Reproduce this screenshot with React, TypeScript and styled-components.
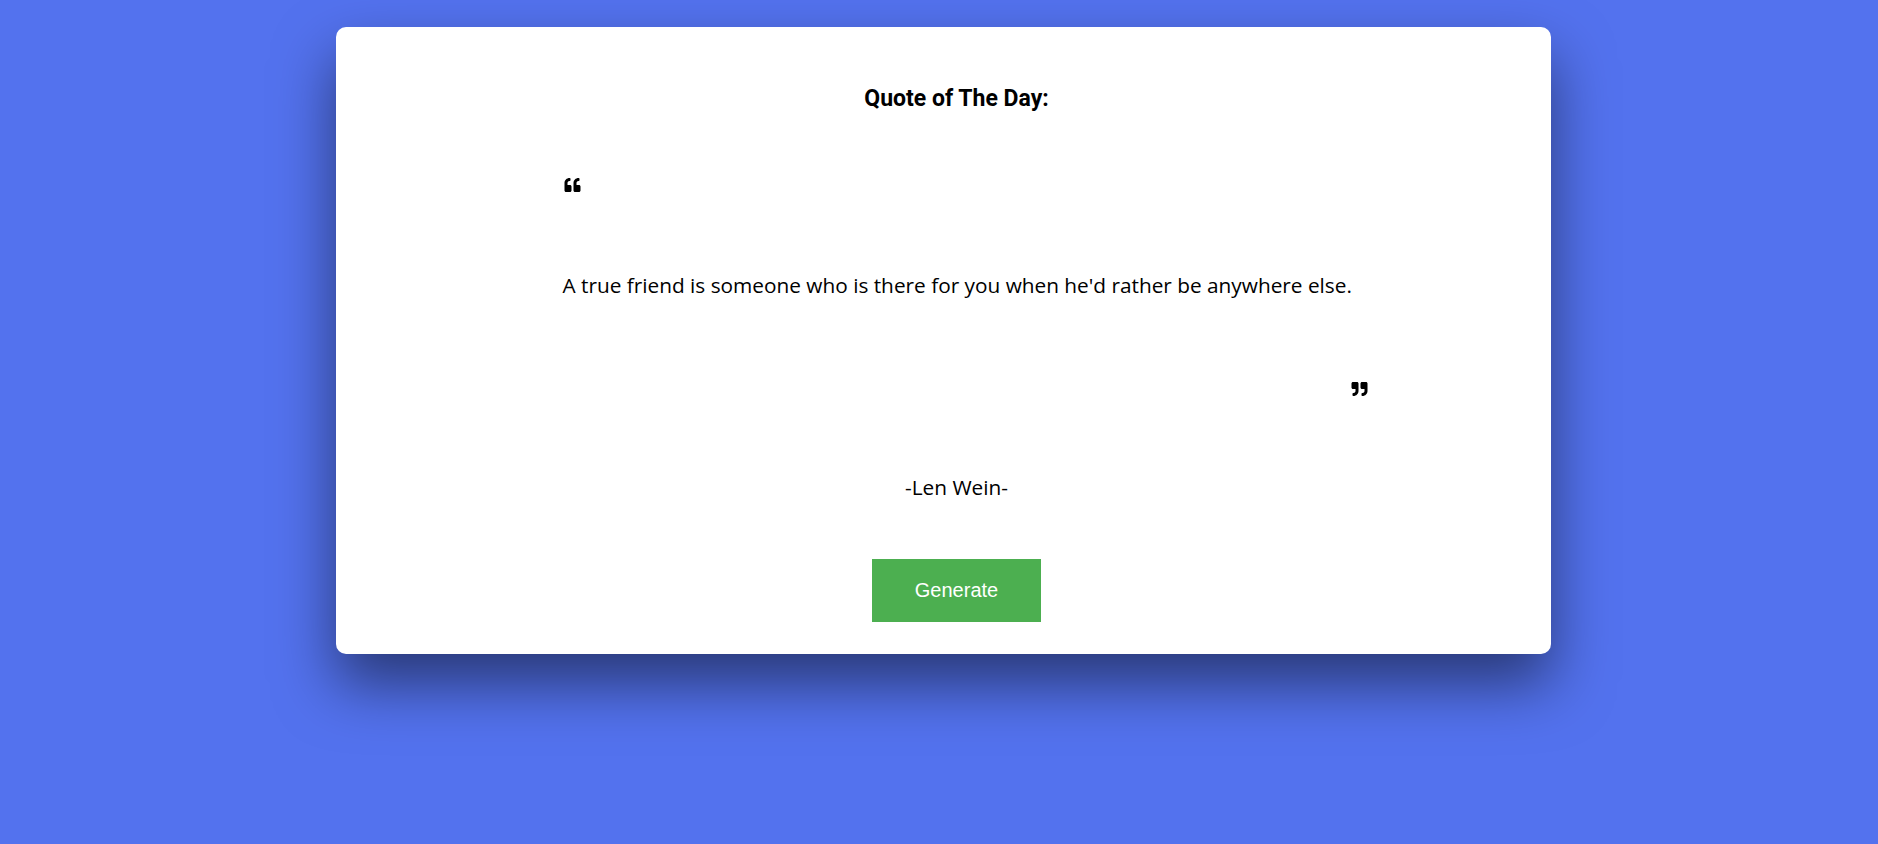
import React from 'react';
import styled, { createGlobalStyle } from 'styled-components';
import { FaQuoteLeft, FaQuoteRight } from 'react-icons/fa';

const GlobalStyle = createGlobalStyle`
  html, body {
    margin: 0;
    padding: 0;
    background: #5372ee;
    font-family: "Open Sans", "Liberation Sans", sans-serif;
  }
`

const Page = styled.div`
  min-height: 844px;
  padding-top: 27px;
  box-sizing: border-box;
`

const Card = styled.div`
  width: 1215px;
  height: 627px;
  margin-left: 336px;
  box-sizing: border-box;
  background: #fff;
  border-radius: 10px;
  box-shadow: 0px 30px 60px rgb(0 0 0 / 50%);
  padding: 0 14px 0 40px;
  display: flex;
  flex-direction: column;
  align-items: center;
`

const Title = styled.h2`
  margin: 57px 0 0;
  font-family: Roboto, "Liberation Sans", sans-serif;
  font-weight: 700;
  font-size: 23px;
  line-height: 30px;
  color: #000;
`

const QuoteBox = styled.div`
  width: 806px;
  margin: 63px 0 0 18px;
  display: flex;
  flex-direction: column;
`

const Mark = styled.div<{ $right?: boolean }>`
  font-size: 16px;
  line-height: 16px;
  color: #000;
  display: flex;
  justify-content: ${p => (p.$right ? 'flex-end' : 'flex-start')};
  svg {
    width: 19px;
    height: 16px;
  }
`

const QuoteText = styled.p`
  margin: 78px 0 0;
  font-size: 20.8px;
  line-height: 28px;
  color: #000;
  white-space: nowrap;
`

const RightMark = styled(Mark)`
  margin-top: 82px;
`

const Author = styled.p`
  margin: 76px 0 0;
  font-size: 20.8px;
  line-height: 28px;
  color: #000;
`

const GenerateButton = styled.button`
  margin-top: 58px;
  width: 169px;
  height: 63px;
  border: none;
  background: #4caf50;
  color: #fff;
  font-family: "Liberation Sans", Arial, sans-serif;
  font-size: 20px;
  cursor: pointer;
`

export default function App() {
  return (
    <Page>
      <GlobalStyle />
      <Card>
        <Title>Quote of The Day:</Title>
        <QuoteBox>
          <Mark><FaQuoteLeft /></Mark>
          <QuoteText>A true friend is someone who is there for you when he'd rather be anywhere else.</QuoteText>
          <RightMark $right><FaQuoteRight /></RightMark>
        </QuoteBox>
        <Author>-Len Wein-</Author>
        <GenerateButton>Generate</GenerateButton>
      </Card>
    </Page>
  );
}
